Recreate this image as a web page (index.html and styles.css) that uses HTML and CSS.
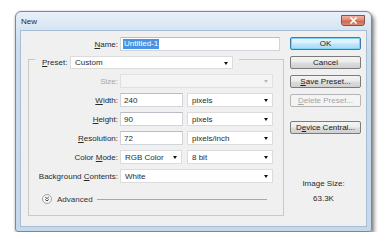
FILE: index.html
```html
<!DOCTYPE html>
<html>
<head>
<meta charset="utf-8">
<link rel="stylesheet" href="styles.css">
</head>
<body>
<div class="window">
  <div class="titlebar">
    <span class="title">New</span>
    <div class="close">
      <svg width="9" height="7" viewBox="0 0 9 7"><path d="M1.5 0.5 L7.5 6.5 M7.5 0.5 L1.5 6.5" stroke="#fff" stroke-width="1.6" fill="none"/></svg>
    </div>
  </div>
  <div class="client">
    <div class="main">
      <div class="name-row">
        <span class="lbl name-lbl"><u>N</u>ame:</span>
        <div class="field name-field"><span class="selected">Untitled-1</span></div>
      </div>
      <div class="group">
        <div class="legend">
          <span class="legend-lbl"><u>P</u>reset:</span>
          <div class="dd preset-dd">Custom</div>
        </div>
        <div class="rows">
          <div class="row">
            <span class="lbl disabled">Size:</span>
            <div class="dd dd-full dd-disabled"></div>
          </div>
          <div class="row">
            <span class="lbl"><u>W</u>idth:</span>
            <div class="field num-field">240</div>
            <div class="dd unit-dd">pixels</div>
          </div>
          <div class="row">
            <span class="lbl"><u>H</u>eight:</span>
            <div class="field num-field">90</div>
            <div class="dd unit-dd">pixels</div>
          </div>
          <div class="row">
            <span class="lbl"><u>R</u>esolution:</span>
            <div class="field num-field">72</div>
            <div class="dd unit-dd">pixels/inch</div>
          </div>
          <div class="row">
            <span class="lbl">Color <u>M</u>ode:</span>
            <div class="dd mode-dd">RGB Color</div>
            <div class="dd unit-dd">8 bit</div>
          </div>
          <div class="row">
            <span class="lbl">Background <u>C</u>ontents:</span>
            <div class="dd dd-full">White</div>
          </div>
        </div>
        <div class="advanced">
          <svg class="chev" width="10" height="10" viewBox="0 0 10 10">
            <circle cx="5" cy="5" r="4.5" fill="#f6f6f6" stroke="#a3a3a3"/>
            <path d="M3.2 3 L5 4.6 L6.8 3 M3.2 5.4 L5 7 L6.8 5.4" stroke="#333" stroke-width="0.9" fill="none"/>
          </svg>
          <span class="adv-text">Advanced</span>
          <span class="adv-line"></span>
        </div>
      </div>
    </div>
    <div class="side">
      <div class="btn btn-default">OK</div>
      <div class="btn">Cancel</div>
      <div class="btn"><u>S</u>ave Preset...</div>
      <div class="btn btn-disabled"><u>D</u>elete Preset...</div>
      <div class="btn btn-device">D<u>e</u>vice Central...</div>
      <div class="info">
        <div>Image Size:</div>
        <div class="info-val">63.3K</div>
      </div>
    </div>
  </div>
</div>
</body>
</html>
```

FILE: styles.css
```css
* { box-sizing: border-box; }
body {
  margin: 0;
  background: #fff;
  font-family: "Liberation Sans", Arial, sans-serif;
  font-size: 8px;
  color: #2a2a2a;
}
u { text-decoration: underline; text-underline-offset: 1px; }

.window {
  margin: 11px 0 0 15px;
  width: 357px;
  height: 221px;
  border: 1px solid #7c8894;
  border-radius: 6px 6px 3px 3px;
  background: linear-gradient(#e8f0f9, #d6e4f3 18px, #cbdcee 40px, #c6d8ec);
  box-shadow: 2px 3px 4px rgba(0,0,0,0.5), 0 0 2px rgba(0,0,0,0.2);
  display: flex;
  flex-direction: column;
}
.titlebar {
  height: 19px;
  display: flex;
  align-items: center;
  padding-left: 5px;
}
.title { color: #1e2a36; font-size: 8px; }
.close {
  margin-left: auto;
  margin-right: 6px;
  margin-top: -3px;
  width: 24px;
  height: 11px;
  border: 1px solid #8a5046;
  border-radius: 0 0 3px 3px;
  background: linear-gradient(#efb2a3, #df8a74 45%, #d0664e 55%, #dc8a70);
  display: flex;
  align-items: center;
  justify-content: center;
}
.client {
  margin: 0 5px 5px 5px;
  flex: 1;
  background: #f0f0f0;
  box-shadow: 0 0 0 1px #a6bdd4;
  display: flex;
}
.main { width: 264px; padding-top: 6px; }
.name-row { display: flex; align-items: center; height: 14px; }
.lbl { text-align: right; white-space: nowrap; }
.name-lbl { width: 97px; margin-right: 2px; }
.field {
  height: 14px;
  background: #fff;
  border: 1px solid #d0d5db;
  border-top-color: #b9bec6;
  padding: 0 3px;
  display: flex;
  align-items: center;
  white-space: nowrap;
}
.name-field { width: 160px; padding-left: 2px; }
.selected { background: #4a93e4; color: #fff; padding: 0 1px; line-height: 10px; }

.group {
  margin: 8px 0 0 7px;
  width: 256px;
  height: 157px;
  border: 1px solid #c9c9c9;
}
.legend {
  margin: -5px 0 0 6px;
  height: 14px;
  width: 204px;
  background: #f0f0f0;
  padding: 0 6px 0 7px;
  display: flex;
  align-items: center;
}
.legend-lbl { width: 26px; margin-right: 2px; white-space: nowrap; }

.dd {
  position: relative;
  height: 14px;
  background: #fff;
  border: 1px solid #dcdcdc;
  padding: 0 12px 0 4px;
  display: flex;
  align-items: center;
  white-space: nowrap;
}
.dd::after {
  content: "";
  position: absolute;
  right: 4px;
  top: 5px;
  border-left: 2.5px solid transparent;
  border-right: 2.5px solid transparent;
  border-top: 3px solid #111;
}
.preset-dd { width: 163px; height: 13px; }
.dd-disabled { background: #f4f4f4; border-color: #e0e0e0; }
.dd-disabled::after { border-top-color: #b5b5b5; }
.dd-full { width: 153px; }
.num-field { width: 63px; margin-right: 4px; }
.unit-dd { width: 86px; }
.mode-dd { width: 62px; margin-right: 5px; }

.rows {
  margin-top: 5px;
  display: flex;
  flex-direction: column;
  gap: 5px;
}
.row { display: flex; align-items: center; height: 14px; }
.row .lbl { width: 89px; margin-right: 2px; }
.disabled { color: #a6a6a6; }

.advanced {
  margin-top: 11px;
  height: 10px;
  padding-left: 13px;
  padding-right: 16px;
  display: flex;
  align-items: center;
}
.chev { flex: none; margin-right: 5px; }
.adv-text { margin-right: 4px; color: #333; }
.adv-line { flex: 1; height: 1px; background: #a8a8a8; }

.side {
  width: 71px;
  margin-left: 5px;
  padding-top: 6px;
  display: flex;
  flex-direction: column;
  gap: 6px;
}
.btn {
  height: 13px;
  border: 1px solid #7b7b7b;
  border-radius: 2px;
  background: linear-gradient(#f4f4f4, #ececec 45%, #dcdcdc 55%, #d0d0d0);
  display: flex;
  align-items: center;
  justify-content: center;
  white-space: nowrap;
  color: #1a1a1a;
}
.btn-default {
  border-color: #3d7bad;
  box-shadow: inset 0 0 0 1px #7fd3f7;
  background: linear-gradient(#eaf6fd, #d9f0fc 45%, #bee6fd 55%, #a7d9f5);
}
.btn-disabled { color: #a5a5a5; border-color: #b5b5b5; background: #f4f4f4; }
.btn-device { margin-top: 8px; }
.info {
  margin-top: 39px;
  text-align: center;
  padding-right: 4px;
  line-height: 10px;
  color: #2a2a2a;
}
.info-val { margin-top: 5px; }
```
